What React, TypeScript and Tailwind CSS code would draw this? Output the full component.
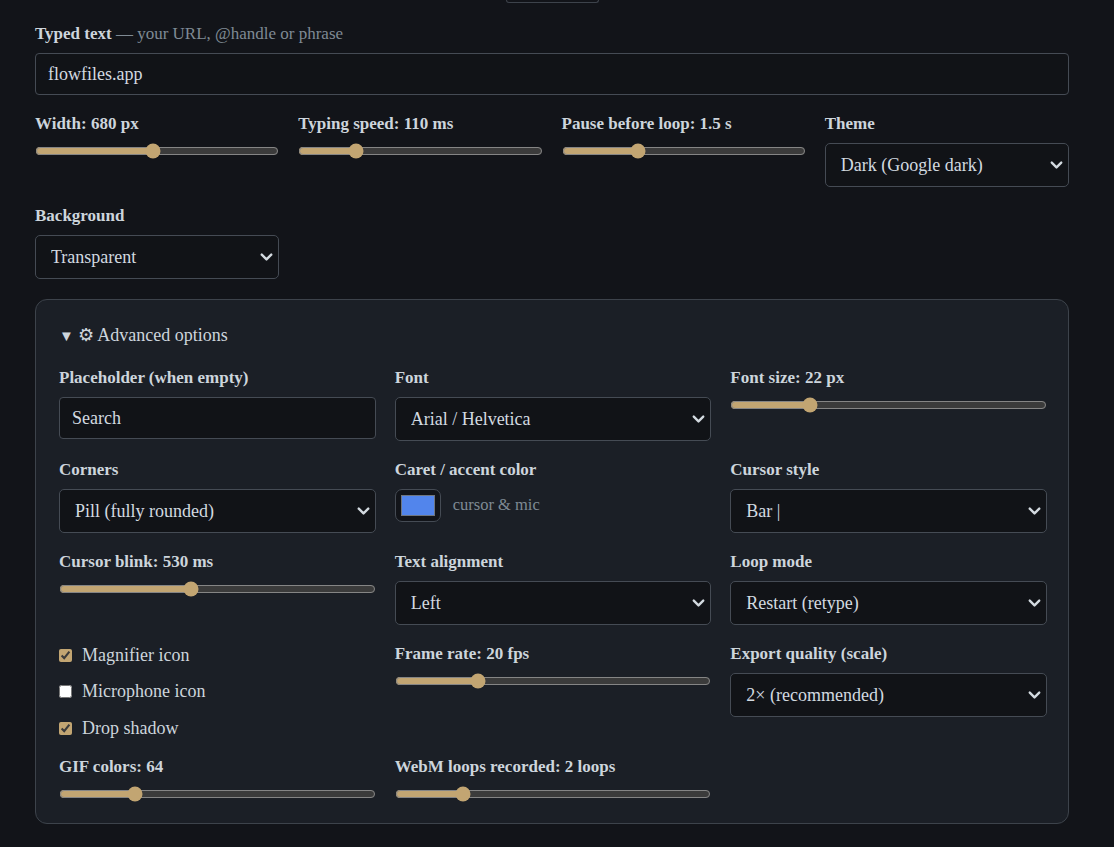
import { useState, type ReactNode } from "react";
import { ChevronDown } from "lucide-react";

const serif = "font-['Liberation_Serif','Times_New_Roman',serif]";

function Label({ children }: { children: ReactNode }) {
  return (
    <div className="mb-[9px] h-5 whitespace-nowrap text-[17px] font-bold leading-5 text-[#cdd5dc]">
      {children}
    </div>
  );
}

function Select({ value, options }: { value: string; options: string[] }) {
  return (
    <div className="relative">
      <select
        defaultValue={value}
        className="h-[44px] w-full appearance-none rounded-[5px] border border-[#454b54] bg-[#111317] pl-[15px] pr-9 text-[18px] text-[#d3dae0] outline-none"
      >
        {options.map((o) => (
          <option key={o}>{o}</option>
        ))}
      </select>
      <ChevronDown
        strokeWidth={3}
        className="pointer-events-none absolute right-[3px] top-1/2 size-[19px] -translate-y-1/2 text-[#d3dae0]"
      />
    </div>
  );
}

function Slider({
  label,
  min,
  max,
  step = 1,
  initial,
  format,
}: {
  label: string;
  min: number;
  max: number;
  step?: number;
  initial: number;
  format: (v: number) => string;
}) {
  const [v, setV] = useState(initial);
  return (
    <div>
      <Label>
        {label}: {format(v)}
      </Label>
      <input
        type="range"
        min={min}
        max={max}
        step={step}
        value={v}
        onChange={(e) => setV(Number(e.target.value))}
        className="m-0 block h-4 w-full accent-[#c2a572] [color-scheme:dark]"
      />
    </div>
  );
}

function Check({ label, checked }: { label: string; checked: boolean }) {
  return (
    <label className="flex h-5 items-center gap-[10px] text-[18px] text-[#cdd5dc]">
      <input
        type="checkbox"
        defaultChecked={checked}
        className="m-0 size-[13px] accent-[#c2a572]"
      />
      {label}
    </label>
  );
}

export default function App() {
  return (
    <div className={`min-h-[847px] bg-[#121419] pl-[35px] pr-[45px] ${serif}`}>
      {/* tail of the preview toolbar button above */}
      <div className="mx-auto h-[3px] w-[93px] rounded-b-md border border-t-0 border-[#3d434b]" />

      <div className="mt-[21px] mb-[9px] h-5 text-[17px] leading-5">
        <span className="font-bold text-[#cdd5dc]">Typed text</span>
        <span className="text-[#7f8a94]"> — your URL, @handle or phrase</span>
      </div>
      <input
        defaultValue="flowfiles.app"
        className="block h-[42px] w-full rounded-[4px] border border-[#454b54] bg-[#111317] px-3 text-[18px] text-[#d3dae0] outline-none"
      />

      <div className="mt-[19px] grid grid-cols-4 gap-[19px]">
        <Slider label="Width" min={200} max={1200} step={10} initial={680} format={(v) => `${v} px`} />
        <Slider label="Typing speed" min={30} max={400} step={10} initial={110} format={(v) => `${v} ms`} />
        <Slider label="Pause before loop" min={0} max={5} step={0.1} initial={1.5} format={(v) => `${v} s`} />
        <div>
          <Label>Theme</Label>
          <Select value="Dark (Google dark)" options={["Light (Google)", "Dark (Google dark)", "Minimal"]} />
        </div>
        <div>
          <Label>Background</Label>
          <Select value="Transparent" options={["Transparent", "White", "Black"]} />
        </div>
      </div>

      <details open className="mt-5 rounded-xl border border-[#3d434b] bg-[#1b1f26] pl-[23px] pr-[21px] pt-[24px] pb-[21px]">
        <summary className="h-[22px] list-none text-[18px] leading-[22px] text-[#cdd5dc] [&::-webkit-details-marker]:hidden">
          <span className="mr-[4px] text-[15px]">▼</span>⚙ Advanced options
        </summary>

        <div className="mt-[22px] grid grid-cols-3 gap-x-[19px] gap-y-[19px]">
          <div>
            <Label>Placeholder (when empty)</Label>
            <input
              defaultValue="Search"
              className="block h-[42px] w-full rounded-[4px] border border-[#454b54] bg-[#111317] px-3 text-[18px] text-[#d3dae0] outline-none"
            />
          </div>
          <div>
            <Label>Font</Label>
            <Select value="Arial / Helvetica" options={["Arial / Helvetica", "Roboto", "Georgia"]} />
          </div>
          <Slider label="Font size" min={10} max={60} initial={22} format={(v) => `${v} px`} />

          <div>
            <Label>Corners</Label>
            <Select value="Pill (fully rounded)" options={["Square", "Rounded", "Pill (fully rounded)"]} />
          </div>
          <div>
            <Label>Caret / accent color</Label>
            <div className="flex items-center gap-3">
              <div className="flex h-[33px] w-[46px] items-center justify-center rounded-[7px] border border-[#454b54] bg-[#121419] p-[5px]">
                <div className="h-full w-full border border-[#6f7680] bg-[#5285ec]" />
              </div>
              <span className="text-[16.5px] text-[#7f8a94]">cursor &amp; mic</span>
            </div>
          </div>
          <div>
            <Label>Cursor style</Label>
            <Select value="Bar |" options={["Bar |", "Block █", "Underscore _"]} />
          </div>

          <Slider label="Cursor blink" min={200} max={1000} step={10} initial={530} format={(v) => `${v} ms`} />
          <div>
            <Label>Text alignment</Label>
            <Select value="Left" options={["Left", "Center"]} />
          </div>
          <div>
            <Label>Loop mode</Label>
            <Select value="Restart (retype)" options={["Restart (retype)", "Backspace", "Once"]} />
          </div>

          <div className="flex flex-col gap-[16.5px] pt-[1px]">
            <Check label="Magnifier icon" checked />
            <Check label="Microphone icon" checked={false} />
            <Check label="Drop shadow" checked />
          </div>
          <Slider label="Frame rate" min={10} max={50} initial={20} format={(v) => `${v} fps`} />
          <div>
            <Label>Export quality (scale)</Label>
            <Select value="2× (recommended)" options={["1×", "2× (recommended)", "3×"]} />
          </div>

          <Slider label="GIF colors" min={8} max={256} initial={64} format={(v) => `${v}`} />
          <Slider label="WebM loops recorded" min={1} max={6} initial={2} format={(v) => `${v} loops`} />
        </div>
      </details>
    </div>
  );
}
